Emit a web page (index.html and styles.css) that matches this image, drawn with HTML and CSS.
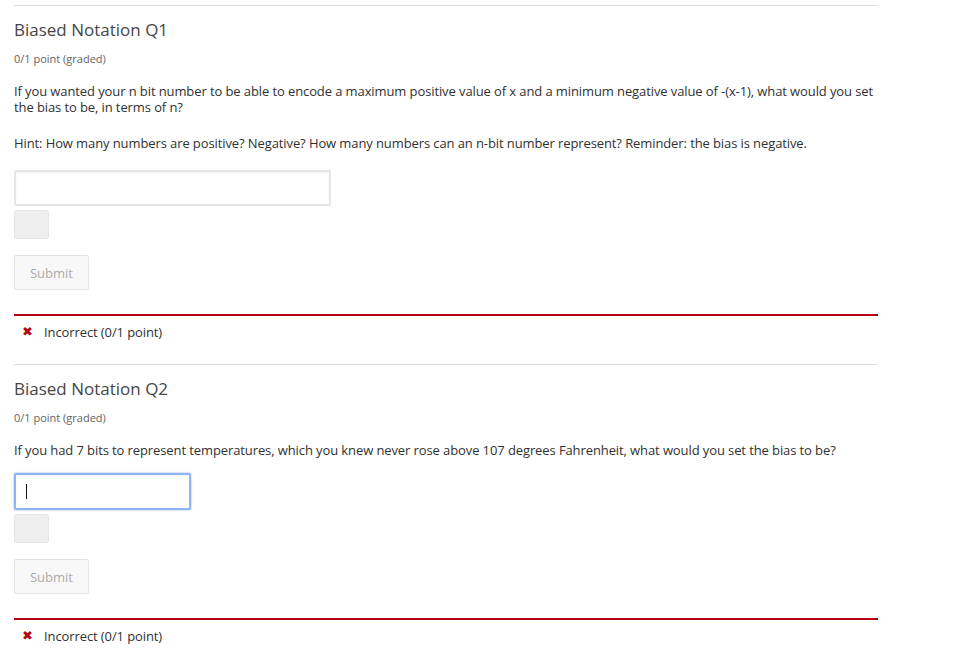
FILE: index.html
```html
<!DOCTYPE html>
<html lang="en">
<head>
<meta charset="utf-8">
<title>Biased Notation</title>
<link rel="stylesheet" href="styles.css">
</head>
<body>
<main class="page">
  <section class="problem">
    <h3 class="problem-title">Biased Notation Q1</h3>
    <div class="problem-progress">0/1 point (graded)</div>
    <p class="question">If you wanted your n bit number to be able to encode a maximum positive value of x and a minimum negative value of -(x-1), what would you set the bias to be, in terms of n?</p>
    <p class="question question-last">Hint: How many numbers are positive? Negative? How many numbers can an n-bit number represent? Reminder: the bias is negative.</p>
    <input class="answer answer-wide" type="text" aria-label="Answer">
    <div class="preview"></div>
    <button class="submit" type="button" disabled>Submit</button>
    <div class="status">
      <span class="status-icon">&#10006;</span>
      <span class="status-text">Incorrect (0/1 point)</span>
    </div>
  </section>
  <section class="problem">
    <h3 class="problem-title">Biased Notation Q2</h3>
    <div class="problem-progress">0/1 point (graded)</div>
    <p class="question question-single">If you had 7 bits to represent temperatures, which you knew never rose above 107 degrees Fahrenheit, what would you set the bias to be?</p>
    <div class="answer answer-narrow answer-focus"><span class="caret"></span></div>
    <div class="preview"></div>
    <button class="submit" type="button" disabled>Submit</button>
    <div class="status">
      <span class="status-icon">&#10006;</span>
      <span class="status-text">Incorrect (0/1 point)</span>
    </div>
  </section>
</main>
</body>
</html>
```

FILE: styles.css
```css
html, body {
  margin: 0;
  padding: 0;
  background: #ffffff;
}

body {
  font-family: "Open Sans", "Noto Sans", sans-serif;
  color: #313131;
}

.page {
  width: 864px;
  padding: 5px 0 0 14px;
}

.problem {
  border-top: 1px solid #dddddd;
  padding-top: 12px;
  padding-bottom: 24px;
}

.problem-title {
  margin: 0;
  font-size: 17px;
  line-height: 24px;
  font-weight: 400;
  color: #464646;
}

.problem-progress {
  margin-top: 9px;
  font-size: 11px;
  line-height: 16px;
  color: #646464;
}

.question {
  margin: 16px 0 0;
  font-size: 13px;
  line-height: 16px;
  letter-spacing: -0.1px;
  color: #313131;
}

.question + .question {
  margin-top: 20px;
}

.question-last {
  margin-bottom: 19px;
}

.question-single {
  margin-bottom: 15px;
}

.answer {
  display: block;
  box-sizing: border-box;
  height: 36px;
  margin: 0;
  padding: 0 10px;
  border: 2px solid #e6e6e6;
  border-radius: 2px;
  background: #ffffff;
  box-shadow: inset 0 1px 2px rgba(0, 0, 0, 0.06);
  font: inherit;
  outline: none;
}

.answer-wide {
  width: 317px;
}

.answer-narrow {
  width: 177px;
  height: 37px;
  display: flex;
  align-items: center;
}

.answer-focus {
  border-color: #8fb5f3;
  box-shadow: 0 0 1px 1px rgba(143, 181, 243, 0.35), inset 0 1px 2px rgba(0, 0, 0, 0.06);
}

.caret {
  display: block;
  width: 1px;
  height: 15px;
  background: #111111;
}

.preview {
  width: 35px;
  height: 29px;
  margin-top: 4px;
  box-sizing: border-box;
  border: 1px solid #e4e4e4;
  border-radius: 3px;
  background: #efefef;
}

.submit {
  display: block;
  box-sizing: border-box;
  width: 75px;
  height: 35px;
  margin-top: 16px;
  padding: 0;
  border: 1px solid #e3e3e3;
  border-radius: 2px;
  background: #f8f8f8;
  color: #ababab;
  font-family: "Open Sans", "Noto Sans", sans-serif;
  font-size: 13px;
}

.status {
  margin-top: 24px;
  border-top: 2px solid #b20610;
  padding-top: 8px;
  display: flex;
  align-items: center;
  font-size: 13px;
  line-height: 16px;
  letter-spacing: -0.1px;
}

.status-icon {
  width: 30px;
  padding-left: 8px;
  box-sizing: border-box;
  color: #b20610;
  font-family: "DejaVu Sans", sans-serif;
  font-size: 13px;
  font-weight: 700;
}

.status-text {
  color: #313131;
}
```
